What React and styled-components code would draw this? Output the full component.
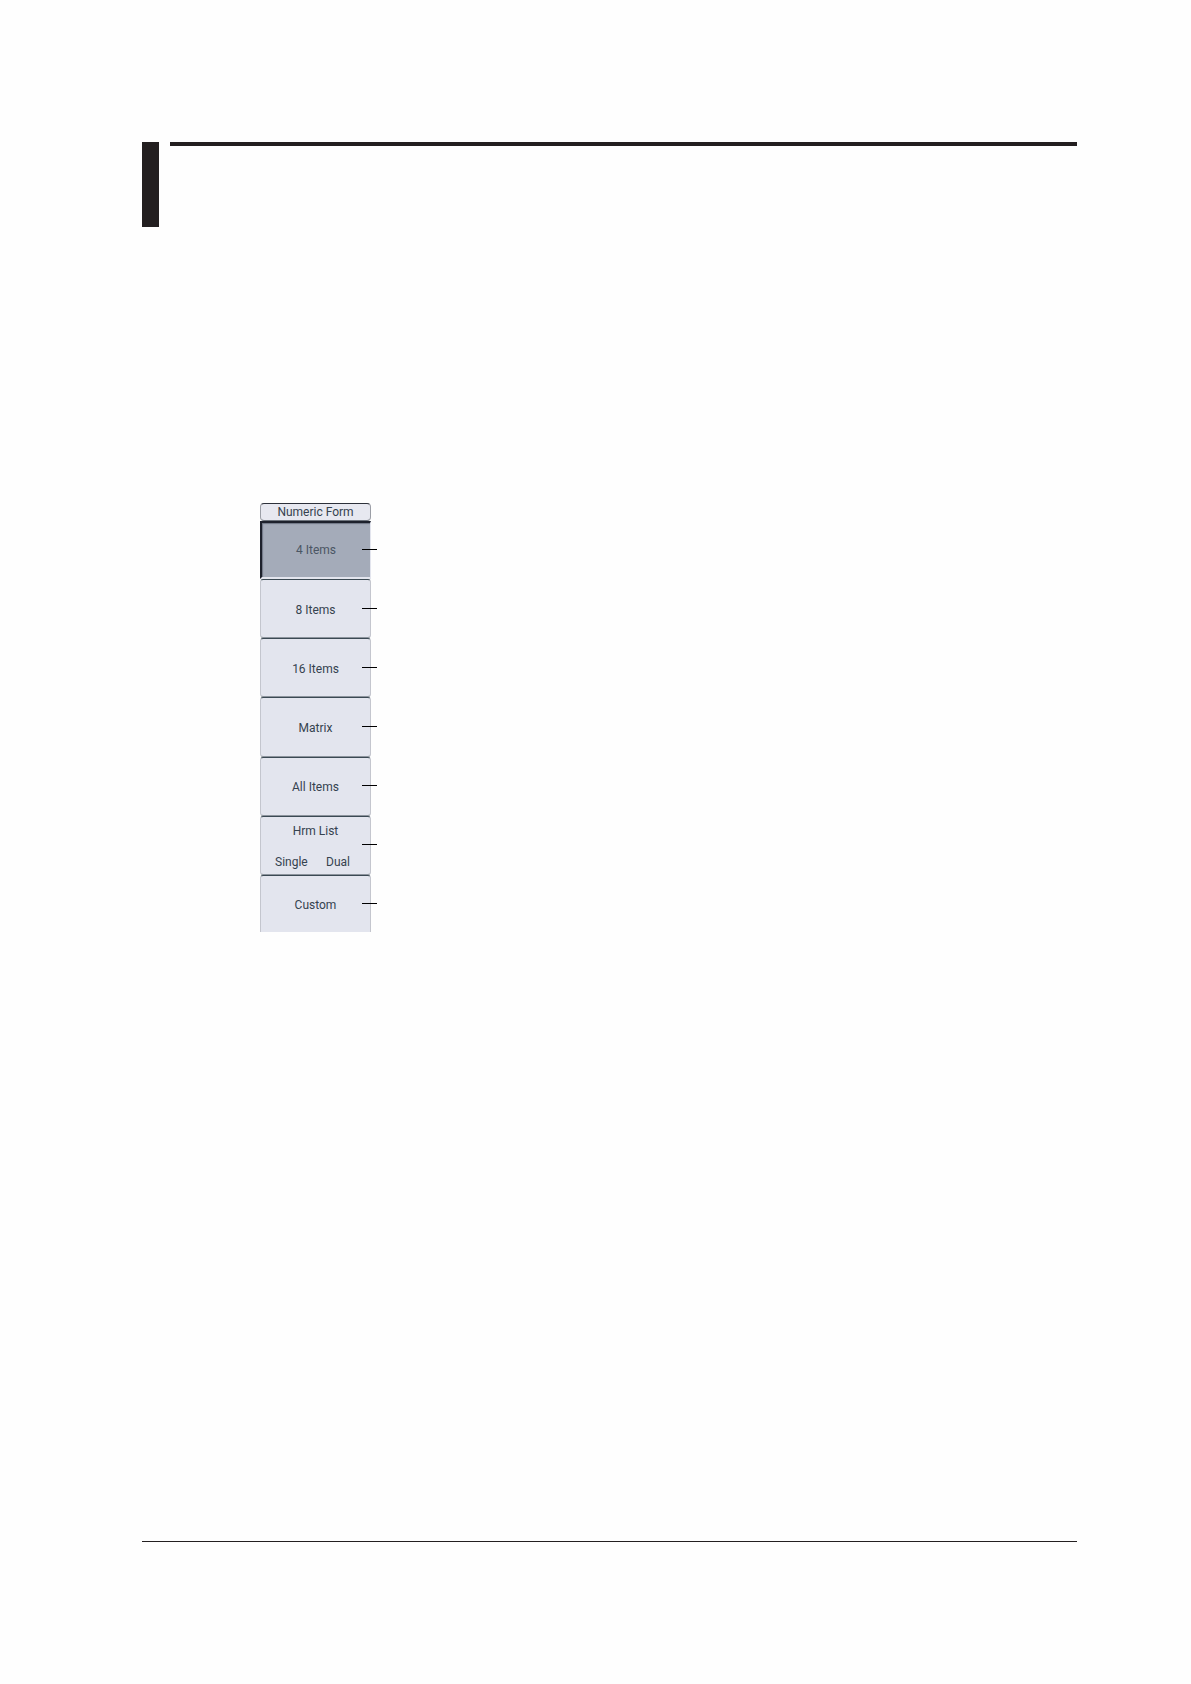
import React from "react";
import styled, { createGlobalStyle } from "styled-components";

const MenuItems = [
    { id: 1, text: "4 Items", active: true },
    { id: 2, text: "8 Items" },
    { id: 3, text: "16 Items" },
    { id: 4, text: "Matrix" },
    { id: 5, text: "All Items" },
    { id: 6, text: "Hrm List", options: ["Single", "Dual"] },
    { id: 7, text: "Custom", last: true },
]

const App = () => {
    return(
        <Page>
            <GlobalStyle/>
            <Header>
                <HeaderTab/>
                <HeaderRule/>
            </Header>
            <Main>
                <Menu aria-label="Numeric Form">
                    <MenuTitle>Numeric Form</MenuTitle>
                    {MenuItems.map(i=>
                        <MenuRow key={i.id}>
                            <MenuButton type="button" $active={i.active} $last={i.last} aria-pressed={!!i.active}>
                                <span>{i.text}</span>
                                {i.options && (
                                    <Options>
                                        {i.options.map(o=><span key={o}>{o}</span>)}
                                    </Options>
                                )}
                            </MenuButton>
                            <Leader/>
                        </MenuRow>
                    )}
                </Menu>
            </Main>
            <FooterRule/>
        </Page>
    )
}

const GlobalStyle = createGlobalStyle`
    * {
        box-sizing: border-box;
    }
    body {
        margin: 0;
        background: #fefefe;
    }
`
const Page = styled.div`
    min-height: 100vh;
    padding: 142px 114px 142px 142px;
    display: flex;
    flex-direction: column;
`
const Header = styled.header`
    display: flex;
    gap: 11px;
`
const HeaderTab = styled.div`
    width: 17px;
    height: 85px;
    background: #231f20;
`
const HeaderRule = styled.div`
    flex: 1;
    height: 4px;
    background: #231f20;
`
const Main = styled.main`
    flex: 1;
    padding: 276px 0 0 118px;
`
const Menu = styled.nav`
    width: 111px;
    height: 429px;
    display: grid;
    grid-template-rows: 18px 58px repeat(5, 1fr) 57px;
    font-family: Roboto, "Liberation Sans", sans-serif;
    font-size: 12px;
    line-height: 16px;
    color: #35424f;
`
const MenuTitle = styled.div`
    border: 1px solid #9b9ea6;
    border-top-color: #2c303a;
    border-bottom-color: #6d737c;
    border-radius: 4px;
    background: #e7e8f0;
    text-align: center;
`
const MenuRow = styled.div`
    position: relative;
    display: flex;
`
const MenuButton = styled.button`
    width: 100%;
    padding: 2px 0 0;
    display: flex;
    flex-direction: column;
    align-items: center;
    justify-content: center;
    gap: 15px;
    border: 1px solid #c4c6ce;
    border-top-color: #3b4953;
    border-bottom: ${p => p.$last ? "none" : "1px solid #8d949d"};
    border-radius: ${p => p.$last ? "3px 3px 0 0" : "3px"};
    background: #e3e5ee;
    font: inherit;
    color: inherit;
    cursor: pointer;

    ${p => p.$active && `
        padding: 0;
        border-width: 2px 1px 2px 2px;
        border-color: #1d212c #e3e5ee #e3e5ee #1d212c;
        border-radius: 0;
        background: #a4abb9;
        box-shadow: inset 1px 1px 1px #6f7685;
        color: #4b5664;
    `}
`
const Options = styled.span`
    width: 100%;
    padding: 0 20px 0 14px;
    display: flex;
    justify-content: space-between;
`
// short line that runs out over the right edge of the button
const Leader = styled.span`
    position: absolute;
    top: calc(50% - 1px);
    left: 102px;
    width: 15px;
    height: 1px;
    background: #000;
`
const FooterRule = styled.footer`
    height: 1px;
    background: #231f20;
`
export default App
